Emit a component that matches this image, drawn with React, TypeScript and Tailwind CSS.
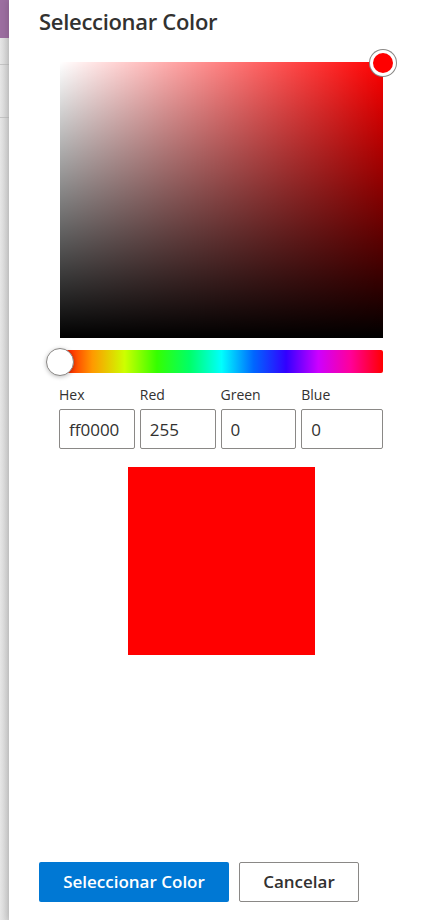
import { useState } from "react";

const font = { fontFamily: '"Open Sans", "Noto Sans", sans-serif' };

const ColorField = ({ label, value, wide }: { label: string; value: string; wide?: boolean }) => (
  <div className={wide ? "flex flex-col w-[82px]" : "flex flex-col w-[76px]"}>
    <label className="text-[14px] leading-[20px] text-[#323130] mb-[4px]">{label}</label>
    <input
      readOnly
      value={value}
      className="h-[40px] w-full border border-[#8a8886] rounded-[2px] px-[9px] text-[17px] text-[#323130] outline-none bg-white"
    />
  </div>
);

export default function App() {
  const [hex] = useState("ff0000");

  return (
    <div className="flex w-[434px] h-[920px] bg-white overflow-hidden" style={font}>
      {/* page behind the panel */}
      <div className="w-[9px] shrink-0 flex flex-col bg-gradient-to-r from-[#e6e6e6] to-[#d2d2d2]">
        <div className="h-[38px] bg-[#9c6ea0]" />
        <div className="h-[26px]" />
        <div className="h-px bg-[#c4c4c4]" />
        <div className="h-[52px]" />
        <div className="h-px bg-[#c4c4c4]" />
      </div>

      {/* panel */}
      <div className="flex-1 flex flex-col bg-white shadow-[-2px_0_6px_rgba(0,0,0,0.12)] pl-[30px] pr-[50px]">
        <h1 className="mt-[5px] text-[22px] leading-[32px] font-semibold text-[#323130] tracking-[-0.3px]">
          Seleccionar Color
        </h1>

        <div className="ml-[21px] mt-[25px] w-[323px]">
          {/* saturation / value square */}
          <div className="relative w-[323px] h-[276px] bg-[#ff0000]">
            <div className="absolute inset-0 bg-gradient-to-r from-white to-transparent" />
            <div className="absolute inset-0 bg-gradient-to-t from-black to-transparent" />
            <div className="absolute -right-[13px] -top-[12px] w-[26px] h-[26px] rounded-full bg-[#ff0000] border-[3px] border-white shadow-[0_0_0_1px_#8a8886]" />
          </div>

          {/* hue slider */}
          <div className="relative mt-[12px] h-[23px] rounded-[2px] bg-[linear-gradient(to_left,red_0,#f09_10%,#cd00ff_20%,#3200ff_30%,#06f_40%,#00fffd_50%,#0f6_60%,#35ff00_70%,#cdff00_80%,#f90_90%,red_100%)]">
            <div className="absolute -left-[14px] top-[-2px] w-[28px] h-[28px] rounded-full bg-white border border-[#8a8886] shadow-[0_1px_4px_rgba(0,0,0,0.25)]" />
          </div>

          {/* fields */}
          <div className="flex gap-[5px] mt-[12px] -ml-[1px]">
            <ColorField label="Hex" value={hex} />
            <ColorField label="Red" value="255" />
            <ColorField label="Green" value="0" />
            <ColorField label="Blue" value="0" wide />
          </div>
        </div>

        {/* preview */}
        <div className="ml-[89px] mt-[18px] w-[187px] h-[188px] bg-[#ff0000]" />

        <div className="flex-1" />

        {/* footer buttons */}
        <div className="flex gap-[10px] mb-[18px]">
          <button className="w-[190px] h-[40px] rounded-[2px] bg-[#0078d4] text-white text-[17px] font-semibold">
            Seleccionar Color
          </button>
          <button className="w-[120px] h-[40px] rounded-[2px] bg-white border border-[#8a8886] text-[#323130] text-[17px] font-semibold">
            Cancelar
          </button>
        </div>
      </div>
    </div>
  );
}
